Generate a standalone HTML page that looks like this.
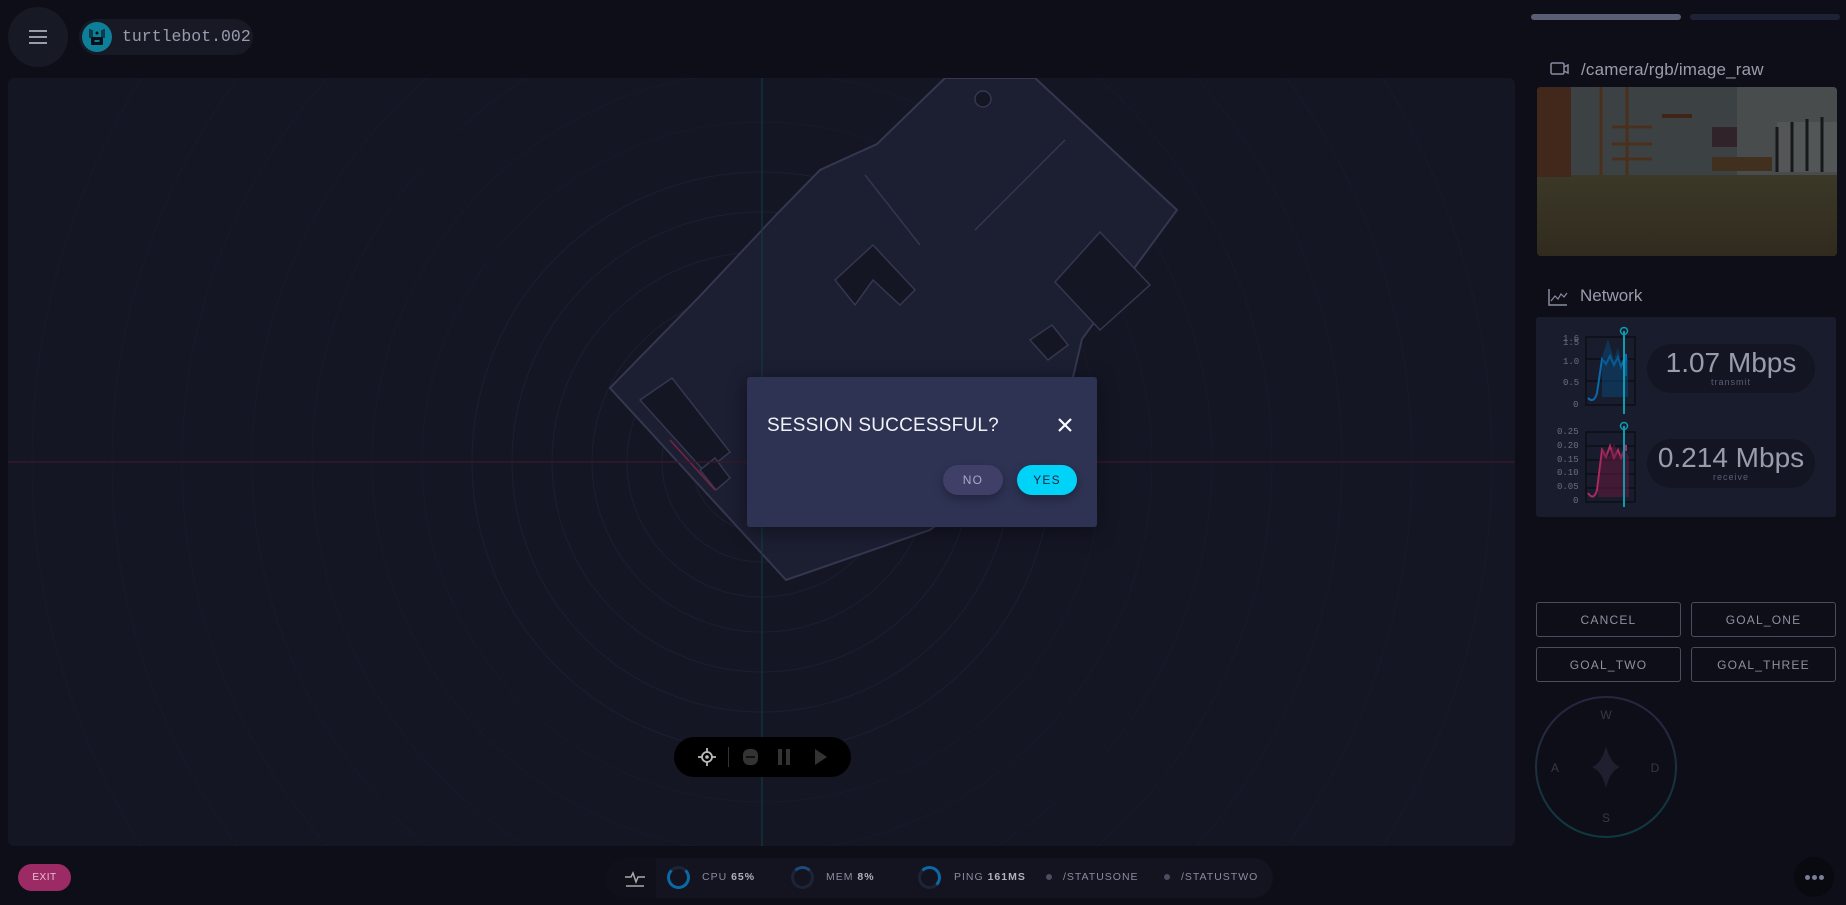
<!DOCTYPE html>
<html><head><meta charset="utf-8"><style>
*{margin:0;padding:0;box-sizing:border-box}
html,body{width:1846px;height:905px;overflow:hidden}
body{background:#0e0e18;position:relative;font-family:"Liberation Sans",sans-serif;color:#9a9cac}
.abs{position:absolute}
.btn{position:absolute;border:1px solid #4a4c60;border-radius:3px;color:#8e90a0;font-size:12px;letter-spacing:1.2px;display:flex;align-items:center;justify-content:center}
.bt{position:absolute;top:870px;font-size:10.5px;letter-spacing:1px;color:#8a8ca0;line-height:14px}
.bt b{color:#b0b2c0;font-weight:bold}
.ring{position:absolute;top:866px;width:23px;height:23px;border-radius:50%;border:3px solid #1d2438}
.dot{position:absolute;top:874px;width:6px;height:6px;border-radius:50%;background:#4a4c60}
</style></head><body>

<div class="abs" style="left:8px;top:78px;width:1507px;height:768px;background:#141624;border-radius:6px;overflow:hidden">
<svg width="1507" height="768" viewBox="8 78 1507 768" style="position:absolute;left:0;top:0;display:block">
<g fill="none" stroke="#1c1f30" stroke-width="1">
<circle cx="762" cy="462" r="40"/><circle cx="762" cy="462" r="70"/><circle cx="762" cy="462" r="100"/><circle cx="762" cy="462" r="135"/><circle cx="762" cy="462" r="170"/><circle cx="762" cy="462" r="210"/><circle cx="762" cy="462" r="250"/><circle cx="762" cy="462" r="290"/>
</g>
<g fill="none" stroke="#181a2a" stroke-width="1">
<circle cx="762" cy="462" r="340"/><circle cx="762" cy="462" r="390"/><circle cx="762" cy="462" r="450"/><circle cx="762" cy="462" r="510"/><circle cx="762" cy="462" r="580"/><circle cx="762" cy="462" r="650"/><circle cx="762" cy="462" r="730"/>
</g>
<polygon points="610,388 700,296 777,214 820,170 877,144 945,78 1035,78 1177,210 1082,339 1060,432 930,530 786,580" fill="#1c1e32" stroke="#34374f" stroke-width="2"/>
<g fill="#141624" stroke="#34374f" stroke-width="1.5">
<polygon points="1100,232 1150,285 1100,330 1055,282"/>
<polygon points="835,280 873,245 915,290 900,305 873,280 855,305"/>
<polygon points="640,400 672,378 730,452 705,472"/>
<polygon points="700,470 715,458 730,478 716,490"/>
<polygon points="1030,340 1052,325 1068,345 1048,360"/>
<circle cx="983" cy="99" r="8"/>
<line x1="975" y1="230" x2="1065" y2="140"/>
<line x1="865" y1="175" x2="920" y2="245"/>
</g>
<polyline points="670,440 715,490" stroke="#7a2244" stroke-width="1.5" fill="none"/>
<line x1="762" y1="78" x2="762" y2="846" stroke="#123a3c" stroke-width="1.2"/>
<line x1="8" y1="462" x2="1515" y2="462" stroke="#3a1a2c" stroke-width="1.2"/>
</svg>
</div>

<div class="abs" style="left:8px;top:7px;width:60px;height:60px;border-radius:50%;background:#171925"></div>
<div class="abs" style="left:29px;top:30px;width:18px;height:2px;background:#9a9cac;box-shadow:0 6px 0 #9a9cac,0 12px 0 #9a9cac"></div>
<div class="abs" style="left:79px;top:19px;width:174px;height:36px;border-radius:18px;background:#171925"></div>
<div class="abs" style="left:82px;top:22px;width:30px;height:30px;border-radius:50%;background:#0e7f99"></div>
<svg class="abs" style="left:82px;top:22px" width="30" height="30"><rect x="9" y="15" width="12" height="8" rx="1" fill="#0a0f18"/><rect x="12.5" y="18" width="5" height="2" fill="#0e7f99"/><circle cx="15" cy="11" r="1.5" fill="#0a0f18"/><path d="M8 7v9M10 8v7M20 8v7M22 7v9" stroke="#0a0f18" stroke-width="1.2"/></svg>
<div class="abs" style="left:122px;top:27px;font-family:'Liberation Mono',monospace;font-size:16.5px;color:#9a9cac">turtlebot.002</div>

<div class="abs" style="left:674px;top:737px;width:177px;height:40px;border-radius:20px;background:#000"></div>
<svg class="abs" style="left:696px;top:746px" width="22" height="22"><circle cx="11" cy="11" r="5" fill="none" stroke="#bbb" stroke-width="1.8"/><circle cx="11" cy="11" r="1.8" fill="#bbb"/><path d="M11 2v4M11 16v4M2 11h4M16 11h4" stroke="#bbb" stroke-width="1.8"/></svg>
<div class="abs" style="left:728px;top:747px;width:1px;height:20px;background:#333"></div>
<div class="abs" style="left:743px;top:749px;width:15px;height:16px;border-radius:6px;background:#333"></div>
<div class="abs" style="left:746px;top:756px;width:9px;height:2px;background:#111"></div>
<div class="abs" style="left:778px;top:749px;width:4px;height:16px;background:#333;box-shadow:8px 0 0 #333"></div>
<div class="abs" style="left:815px;top:749px;width:0;height:0;border-left:12px solid #333;border-top:8px solid transparent;border-bottom:8px solid transparent"></div>

<div class="abs" style="left:747px;top:377px;width:350px;height:150px;background:#2e3354;border-radius:3px;box-shadow:0 4px 20px rgba(0,0,0,.4)"></div>
<div class="abs" style="left:767px;top:415px;font-size:19px;color:#f2f2f6;letter-spacing:.2px">SESSION SUCCESSFUL?</div>
<svg class="abs" style="left:1057px;top:417px" width="16" height="16"><path d="M2 2L14 14M14 2L2 14" stroke="#fff" stroke-width="2.2"/></svg>
<div class="abs" style="left:943px;top:465px;width:60px;height:30px;border-radius:15px;background:#3f3f68;color:#a8a8c8;font-size:12px;letter-spacing:1.2px;display:flex;align-items:center;justify-content:center;box-shadow:0 4px 10px rgba(0,0,0,.3)">NO</div>
<div class="abs" style="left:1017px;top:465px;width:60px;height:30px;border-radius:15px;background:#00d2f8;color:#1a2340;font-size:12px;letter-spacing:1.2px;display:flex;align-items:center;justify-content:center;box-shadow:0 4px 10px rgba(0,0,0,.3)">YES</div>

<div class="abs" style="left:18px;top:864px;width:53px;height:27px;border-radius:14px;background:#9c2a64;color:#e8c0d4;font-size:10px;display:flex;align-items:center;justify-content:center;letter-spacing:.5px">EXIT</div>
<div class="abs" style="left:606px;top:858px;width:667px;height:40px;border-radius:20px;background:#13141f"></div>
<div class="abs" style="left:606px;top:858px;width:50px;height:40px;border-radius:20px 0 0 20px;background:#0f1019"></div>
<svg class="abs" style="left:623px;top:866px" width="24" height="24"><path d="M2 11h6l2-4 3 9 2-5h7" fill="none" stroke="#aaa" stroke-width="1.5"/><path d="M3 20h18" stroke="#aaa" stroke-width="1.5"/></svg>
<div class="ring" style="left:667px;border-left-color:#0a6aa8;border-bottom-color:#0a6aa8;border-right-color:#0a6aa8"></div>
<div class="bt" style="left:702px">CPU <b>65%</b></div>
<div class="ring" style="left:791px;border-top-color:#1d4a7a"></div>
<div class="bt" style="left:826px">MEM <b>8%</b></div>
<div class="ring" style="left:918px;border-top-color:#0a6aa8;border-right-color:#0a6aa8"></div>
<div class="bt" style="left:954px">PING <b>161MS</b></div>
<div class="dot" style="left:1046px"></div><div class="bt" style="left:1063px">/STATUSONE</div>
<div class="dot" style="left:1164px"></div><div class="bt" style="left:1181px">/STATUSTWO</div>
<div class="abs" style="left:1794px;top:857px;width:40px;height:40px;border-radius:50%;background:#090a10"></div>
<div class="abs" style="left:1805px;top:875px;width:5px;height:5px;border-radius:50%;background:#7a7e98;box-shadow:7px 0 0 #7a7e98,14px 0 0 #7a7e98"></div>

<div class="abs" style="left:1531px;top:14px;width:150px;height:6px;border-radius:3px;background:#5a5e74"></div>
<div class="abs" style="left:1690px;top:14px;width:150px;height:6px;border-radius:3px;background:#1e2236"></div>
<svg class="abs" style="left:1550px;top:61px" width="20" height="16"><rect x="1" y="2" width="13" height="11" rx="1.5" fill="none" stroke="#8a8ca0" stroke-width="1.5"/><path d="M14 6l4-2v8l-4-2" fill="none" stroke="#8a8ca0" stroke-width="1.5"/></svg>
<div class="abs" style="left:1581px;top:60px;font-size:17px;color:#9a9cac;letter-spacing:.2px">/camera/rgb/image_raw</div>
<div class="abs" style="left:1537px;top:87px;width:300px;height:169px;border-radius:4px;overflow:hidden;background:#3a3e40">
<svg width="300" height="169" style="display:block">
<defs><linearGradient id="fl" x1="0" y1="0" x2="0" y2="1"><stop offset="0" stop-color="#3c3828"/><stop offset="1" stop-color="#302b1e"/></linearGradient></defs>
<rect width="300" height="90" fill="#3c4244"/>
<rect x="200" y="0" width="100" height="90" fill="#484c4d"/>
<rect y="88" width="300" height="81" fill="url(#fl)"/>
<rect x="0" y="0" width="34" height="90" fill="#42281a"/>
<path d="M64 0v88M90 0v88M75 40h40M75 57h40M75 72h40" stroke="#4a301c" stroke-width="3"/>
<rect x="175" y="70" width="60" height="14" fill="#42301e"/>
<rect x="175" y="40" width="25" height="20" fill="#30242a"/>
<rect x="240" y="35" width="60" height="50" fill="#525656"/>
<path d="M240 40v45M255 35v50M270 32v52M285 30v55" stroke="#161819" stroke-width="3"/>
<rect x="125" y="27" width="30" height="4" fill="#402418"/>
</svg></div>

<svg class="abs" style="left:1548px;top:288px" width="20" height="18"><path d="M1 1v16h18" fill="none" stroke="#8a8ca0" stroke-width="1.5"/><path d="M3 13l4-5 3 3 3-5 3 3 3-4" fill="none" stroke="#8a8ca0" stroke-width="1.2"/></svg>
<div class="abs" style="left:1580px;top:286px;font-size:17px;color:#9a9cac">Network</div>
<div class="abs" style="left:1536px;top:317px;width:300px;height:200px;background:#181c2d;border-radius:3px"></div>
<svg class="abs" style="left:1536px;top:317px" width="300" height="200" font-family="Liberation Mono,monospace" font-size="9" fill="#6a6e80">
<g stroke="#0c0e16" stroke-width="1.5" fill="none"><rect x="50" y="20" width="49" height="68"/><line x1="50" y1="42" x2="99" y2="42"/><line x1="50" y1="64" x2="99" y2="64"/><rect x="50" y="115" width="49" height="70"/><line x1="50" y1="129" x2="99" y2="129"/><line x1="50" y1="143" x2="99" y2="143"/><line x1="50" y1="157" x2="99" y2="157"/><line x1="50" y1="171" x2="99" y2="171"/></g>
<text x="27" y="24">1.6</text><text x="27" y="28">1.5</text><text x="27" y="47">1.0</text><text x="27" y="68">0.5</text><text x="37" y="90">0</text>
<text x="21" y="117">0.25</text><text x="21" y="131">0.20</text><text x="21" y="145">0.15</text><text x="21" y="158">0.10</text><text x="21" y="172">0.05</text><text x="37" y="186">0</text>
<path d="M52 81c4 4 7 2 9-5l5-34 4 5 4-8 4 9 4-8 3 10 5-13v22" fill="none" stroke="#0a6aa8" stroke-width="2"/>
<path d="M66 40l6-18 6 20 4-12 4 22 6-12v40H66z" fill="#0a4a7a" opacity=".5"/>
<path d="M52 176c4 6 7 4 9-3l5-40 4 7 4-11 4 12 4-8 3 8 5-13v6" fill="none" stroke="#b02a60" stroke-width="2"/>
<path d="M62 170l5-40 6 10 5-14 5 14 5-8 5 8v40H62z" fill="#6a1a40" opacity=".5"/>
<line x1="88" y1="14" x2="88" y2="97" stroke="#0e9ab0" stroke-width="2"/><circle cx="88" cy="14" r="3.5" fill="none" stroke="#0e9ab0" stroke-width="1.5"/>
<line x1="88" y1="109" x2="88" y2="190" stroke="#0e9ab0" stroke-width="2"/><circle cx="88" cy="109" r="3.5" fill="none" stroke="#0e9ab0" stroke-width="1.5"/>
</svg>
<div class="abs" style="left:1647px;top:344px;width:168px;height:49px;border-radius:25px;background:#131622"></div>
<div class="abs" style="left:1647px;top:347px;width:168px;text-align:center;font-size:28px;color:#9a9cac">1.07 Mbps</div>
<div class="abs" style="left:1647px;top:377px;width:168px;text-align:center;font-size:9px;letter-spacing:1px;color:#5a5e74">transmit</div>
<div class="abs" style="left:1647px;top:439px;width:168px;height:49px;border-radius:25px;background:#131622"></div>
<div class="abs" style="left:1647px;top:442px;width:168px;text-align:center;font-size:28px;color:#9a9cac">0.214 Mbps</div>
<div class="abs" style="left:1647px;top:472px;width:168px;text-align:center;font-size:9px;letter-spacing:1px;color:#5a5e74">receive</div>

<div class="btn" style="left:1536px;top:602px;width:145px;height:35px">CANCEL</div>
<div class="btn" style="left:1691px;top:602px;width:145px;height:35px">GOAL_ONE</div>
<div class="btn" style="left:1536px;top:647px;width:145px;height:35px">GOAL_TWO</div>
<div class="btn" style="left:1691px;top:647px;width:145px;height:35px">GOAL_THREE</div>

<svg class="abs" style="left:1533px;top:694px" width="146" height="146">
<defs><linearGradient id="jg" x1="0" y1="0" x2="0" y2="1"><stop offset="0" stop-color="#2a2440"/><stop offset="1" stop-color="#0e3a40"/></linearGradient></defs>
<circle cx="73" cy="73" r="70" fill="none" stroke="url(#jg)" stroke-width="2"/>
<path d="M73 52q4 17 14 21q-10 4-14 21q-4-17-14-21q10-4 14-21z" fill="#1e2030"/>
<g font-size="12" fill="#353848" text-anchor="middle"><text x="73" y="25">W</text><text x="73" y="128">S</text><text x="22" y="78">A</text><text x="122" y="78">D</text></g>
</svg>
</body></html>
